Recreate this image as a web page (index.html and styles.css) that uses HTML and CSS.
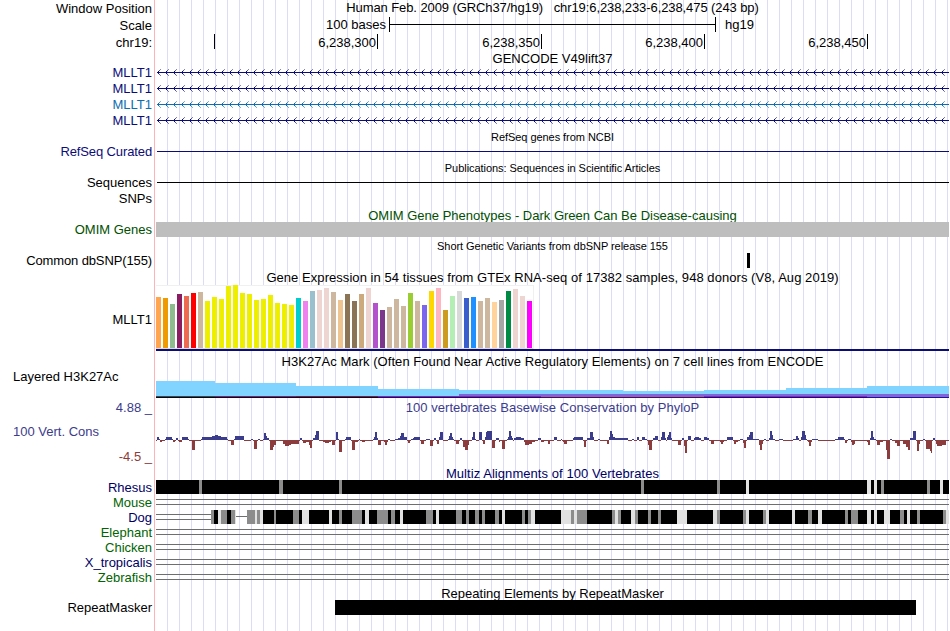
FILE: index.html
```
<!DOCTYPE html>
<html lang="en">
<head>
  <meta charset="UTF-8" />
  <title>Human chr19:6,238,233-6,238,475 - Genome Browser</title>
  <link rel="stylesheet" href="styles.css">
</head>
<body>

<div class="browser">

  <!-- Position and ruler -->
  <div class="row h17">
    <div class="label">Window Position</div>
    <div class="title position">Human Feb. 2009 (GRCh37/hg19) &nbsp; chr19:6,238,233-6,238,475 (243 bp)</div>
  </div>
  <div class="row h17">
    <div class="label">Scale</div>
    <div class="scale">
      <span class="scale-size">100 bases</span>
      <span class="scale-bar"></span>
      <span>hg19</span>
    </div>
  </div>
  <div class="row h16">
    <div class="label">chr19:</div>
    <div class="ruler">
      <span class="tick first"></span>
      <span class="tick">6,238,300</span>
      <span class="tick wide">6,238,350</span>
      <span class="tick">6,238,400</span>
      <span class="tick">6,238,450</span>
    </div>
  </div>

  <!-- Genes -->
  <div class="row h14"><div class="title gencode">GENCODE V49lift37</div></div>
  <div class="row h16 navy"><div class="label">MLLT1</div><svg class="track gene"></svg></div>
  <div class="row h16 navy"><div class="label">MLLT1</div><svg class="track gene"></svg></div>
  <div class="row h16 blue"><div class="label">MLLT1</div><svg class="track gene"></svg></div>
  <div class="row h16 navy"><div class="label">MLLT1</div><svg class="track gene"></svg></div>
  <div class="row h16"><div class="title small">RefSeq genes from NCBI</div></div>
  <div class="row h15 navy"><div class="label tight">RefSeq Curated</div><div class="line"></div></div>
  <div class="row h16"><div class="title small">Publications: Sequences in Scientific Articles</div></div>
  <div class="row h15"><div class="label">Sequences</div><div class="line"></div></div>
  <div class="row h17"><div class="label">SNPs</div></div>
  <div class="row h15 green"><div class="title omim">OMIM Gene Phenotypes - Dark Green Can Be Disease-causing</div></div>
  <div class="row h15 green"><div class="label">OMIM Genes</div><div class="omim-bar"></div></div>
  <div class="row h16"><div class="title small">Short Genetic Variants from dbSNP release 155</div></div>
  <div class="row h15"><div class="label tight">Common dbSNP(155)</div><div class="snp"></div></div>

  <!-- GTEx -->
  <div class="row h17"><div class="title gtex-title">Gene Expression in 54 tissues from GTEx RNA-seq of 17382 samples, 948 donors (V8, Aug 2019)</div></div>
  <div class="row h66">
    <div class="label">MLLT1</div>
    <div class="gtex">
      <div class="gtex-bars" id="gtex"></div>
    </div>
  </div>

  <!-- H3K27Ac -->
  <div class="row h20"><div class="title h3k-title">H3K27Ac Mark (Often Found Near Active Regulatory Elements) on 7 cell lines from ENCODE</div></div>
  <div class="row h29 h3k-row"><div class="label left">Layered H3K27Ac</div><svg class="track" id="h3k"></svg></div>

  <!-- Conservation -->
  <div class="row h15 cons"><div class="label">4.88 _</div><div class="title phylop-title">100 vertebrates Basewise Conservation by PhyloP</div></div>
  <div class="row h52 cons">
    <div class="cons-labels">
      <div class="label left">100 Vert. Cons</div>
      <div class="label low">-4.5 _</div>
    </div>
    <svg class="track" id="phylop"></svg>
  </div>
  <div class="row h13 midnight"><div class="title multiz">Multiz Alignments of 100 Vertebrates</div></div>
  <div class="row h15 midnight"><div class="label">Rhesus</div><svg class="track" id="rhesus"></svg></div>
  <div class="row h15 forest"><div class="label">Mouse</div><div class="gap"></div></div>
  <div class="row h15 midnight"><div class="label">Dog</div><svg class="track" id="dog"></svg></div>
  <div class="row h15 forest"><div class="label">Elephant</div><div class="gap"></div></div>
  <div class="row h15 forest"><div class="label">Chicken</div><div class="gap"></div></div>
  <div class="row h15 midnight"><div class="label">X_tropicalis</div><div class="gap"></div></div>
  <div class="row h15 forest"><div class="label">Zebrafish</div><div class="gap"></div></div>

  <!-- Repeats -->
  <div class="row h15"><div class="title repeat-title">Repeating Elements by RepeatMasker</div></div>
  <div class="row h15"><div class="label">RepeatMasker</div><div class="repeat"></div></div>

</div>

<script src="script.js"></script>
</body>
</html>
```
FILE: styles.css
```
body {
  margin: 0;
  background: #fff;
  font-family: "Liberation Sans", Arial, sans-serif;
  font-size: 13px;
  color: #000;
}
.browser {
  width: 949px;
  height: 631px;
  overflow: hidden;
  background:
    linear-gradient(#ffb4b4, #ffb4b4) 154px 0 / 1px 100% no-repeat,
    repeating-linear-gradient(to right, transparent 0 11px, #dcdcf8 11px 12px) 156px 0 / 793px 100% no-repeat;
}
.row {
  display: grid;
  grid-template-columns: 152px 793px;
  grid-template-rows: 100%;
  column-gap: 4px;
  white-space: nowrap;
}
.h13 { height: 13px; line-height: 13px; }
.h14 { height: 14px; line-height: 16px; }
.h15 { height: 15px; line-height: 15px; }
.h16 { height: 16px; line-height: 17px; }
.h17 { height: 17px; line-height: 17px; }
.h20 { height: 20px; line-height: 21px; }
.h29 { height: 29px; }
.h52 { height: 52px; }
.h66 { height: 66px; line-height: 69px; }

.navy { color: #0c0c78; }
.blue { color: #0c6eb0; }
.green { color: #005000; }
.cons { color: #3c3c8c; }
.midnight { color: #000064; }
.forest { color: #006400; }

.label {
  grid-column: 1;
  text-align: right;
}
.label.left {
  text-align: left;
  padding-left: 13px;
}
.label.tight {
  letter-spacing: -0.12px;
}
.title {
  grid-column: 2;
  text-align: center;
}
.small {
  font-size: 11px;
  line-height: 19px;
  letter-spacing: -0.05px;
}
.position {
  line-height: 15px;
  letter-spacing: -0.09px;
}
.gencode {
  line-height: 18px;
}
.omim {
  line-height: 17px;
}
.gtex-title {
  line-height: 19px;
  letter-spacing: 0.055px;
}
.h3k-title {
  letter-spacing: 0.05px;
}
.phylop-title {
  letter-spacing: 0.03px;
}
.multiz {
  letter-spacing: 0.06px;
}
.repeat-title {
  line-height: 17px;
}
.track {
  display: block;
  width: 793px;
  height: 100%;
  shape-rendering: crispEdges;
}

/* scale and ruler */
.scale {
  display: flex;
  line-height: 16px;
}
.scale-size {
  width: 230px;
  margin-right: 3px;
  text-align: right;
}
.scale-bar {
  width: 325px;
  height: 15px;
  margin-right: 9px;
  border: solid #000;
  border-width: 0 1px;
  background: linear-gradient(#000, #000) 0 7px / 100% 1px no-repeat;
}
.ruler {
  display: flex;
}
.tick {
  box-sizing: border-box;
  width: 163px;
  height: 15px;
  border-right: 1px solid #000;
  padding-right: 1px;
  text-align: right;
}
.tick.first {
  width: 59px;
}
.tick.wide {
  width: 164px;
}

/* simple tracks */
.line {
  height: 1px;
  margin: 7px 0 0 1px;
  background: currentColor;
}
.omim-bar {
  background: #bebebe;
}
.snp {
  width: 3px;
  margin-left: 591px;
  background: #000;
}
.repeat {
  width: 581px;
  margin-left: 179px;
  background: #000;
}
.gap {
  height: 4px;
  margin-top: 4px;
  border: solid #6e6e6e;
  border-width: 1px 0;
}

/* expression bars */
.gtex {
  border-bottom: 2px solid #0c0c78;
}
.gtex-bars {
  display: flex;
  align-items: flex-end;
  gap: 2px;
  box-sizing: border-box;
  width: 378px;
  height: 64px;
  background: #fff;
  border: solid #f0f0f0;
  border-width: 1px 1px 0 0;
  box-shadow: inset 0 -1px #dcdcdc;
  padding-bottom: 1px;
}
.gtex-bars div {
  flex: none;
  width: 5px;
}

/* signal tracks */
.h3k-row .label {
  line-height: 11px;
}
.cons-labels {
  display: flex;
  flex-direction: column;
  line-height: 15px;
}
.cons-labels .label.left {
  margin-top: 9px;
}
.label.low {
  margin-top: 10px;
  color: #8c3c3c;
}
```
FILE: script.js
```
const SVG_NS = "http://www.w3.org/2000/svg";
const START = 156;
const END = 949;

function setup(svg, height) {
  svg.setAttribute("viewBox", `${START} 0 ${END - START} ${height}`);
  svg.setAttribute("preserveAspectRatio", "none");
}

function rect(svg, x, y, w, h, fill, opacity) {
  const r = document.createElementNS(SVG_NS, "rect");
  r.setAttribute("x", x);
  r.setAttribute("y", y);
  r.setAttribute("width", w);
  r.setAttribute("height", h);
  r.setAttribute("fill", fill);
  if (opacity) r.setAttribute("opacity", opacity);
  svg.appendChild(r);
}

// Introns with strand arrows
document.querySelectorAll(".gene").forEach(svg => {
  setup(svg, 16);
  rect(svg, START + 1, 8, END - START, 1, "currentColor");
  for (let x = START + 1; x < END; x += 8) {
    rect(svg, x + 1, 7, 1, 3, "currentColor");
    rect(svg, x + 2, 6, 1, 1, "currentColor", 0.7);
    rect(svg, x + 2, 10, 1, 1, "currentColor", 0.7);
    rect(svg, x + 3, 5, 1, 1, "currentColor", 0.5);
    rect(svg, x + 3, 11, 1, 1, "currentColor", 0.5);
  }
});

// GTEx tissues: colour, height
const tissues = [
  ["#ffa54f", 51], ["#ee9a00", 50], ["#8fbc8f", 44], ["#8b1c62", 54], ["#ee6a50", 52], ["#ff0000", 55],
  ["#cdb79e", 56], ["#eeee00", 47], ["#eeee00", 51], ["#eeee00", 49], ["#eeee00", 62], ["#eeee00", 63],
  ["#eeee00", 55], ["#eeee00", 54], ["#eeee00", 48], ["#eeee00", 49], ["#eeee00", 53], ["#eeee00", 45],
  ["#eeee00", 44], ["#eeee00", 43], ["#00cdcd", 50], ["#ee82ee", 47], ["#9ac0cd", 57], ["#eed5d2", 58],
  ["#eed5d2", 60], ["#cdb79e", 56], ["#eec591", 48], ["#8b7355", 54], ["#8b7355", 47], ["#cdaa7d", 54],
  ["#eed5d2", 60], ["#b452cd", 45], ["#7a378b", 38], ["#cdb79e", 41], ["#cdb79e", 49], ["#cdb79e", 42],
  ["#9acd32", 55], ["#cdb79e", 47], ["#7a67ee", 43], ["#ffd700", 57], ["#ffb6c1", 60], ["#cd9b1d", 38],
  ["#b4eeb4", 52], ["#d9d9d9", 57], ["#3a5fcd", 50], ["#1e90ff", 51], ["#cdb79e", 47], ["#cdb79e", 50],
  ["#ffd39b", 46], ["#a6a6a6", 48], ["#008b45", 57], ["#eed5d2", 59], ["#eed5d2", 52], ["#ff00ff", 47]
];
document.getElementById("gtex").innerHTML = tissues
  .map(([color, h]) => `<div style="height:${h}px;background:${color}"></div>`)
  .join("");

// H3K27Ac: x, end, signal height, purple height, colour of the lowest layer
const h3k = document.getElementById("h3k");
setup(h3k, 29);
[
  [156, 215, 17, 0, "#285050"], [215, 296, 15, 0, "#6e2878"], [296, 378, 12, 2, "#6e2050"],
  [378, 459, 9, 2, "#6432c8"], [459, 541, 8, 4, "#6432c8"], [541, 623, 8, 4, "#8264d8"],
  [623, 704, 7, 4, "#8264d8"], [704, 786, 8, 4, "#6e32c8"], [786, 867, 10, 4, "#6e32c8"],
  [867, 949, 12, 4, "#8264d8"]
].forEach(([x, end, h, purple, low]) => {
  rect(h3k, x, 27 - h, end - x, h, "#80d4ff");
  rect(h3k, x, 27 - purple, end - x, purple, "#8264d8");
  rect(h3k, x, 25, end - x, 1, low);
  rect(h3k, x, 26, end - x, 1, x < 378 ? "#140014" : x < 541 ? "#3c0050" : x < 704 ? "#5a0a3c" : x < 867 ? "#32006e" : "#1e149b");
});

// PhyloP: x, width, score height
const phylop = document.getElementById("phylop");
const ZERO = 25;
setup(phylop, 52);
const scores = `157,2,3 159,1,1 160,2,-2 165,1,1 166,6,3 172,1,1 173,2,-2 176,2,2 179,3,-2 182,6,3 188,1,1
192,3,-10 201,1,1 202,10,3 212,3,4 215,3,5 218,3,4 221,6,3 227,1,1 231,3,-5 234,1,1 235,9,4 251,2,1
254,3,-9 258,2,1 263,1,1 264,2,7 266,1,4 267,2,2 270,3,-10 273,1,-7 274,2,-5 283,2,-4 285,4,-6 289,2,-5
291,8,-4 300,2,2 303,3,-3 306,3,-2 309,1,-5 310,2,-8 313,2,2 315,1,5 316,3,9 323,2,-2 325,4,-3 329,2,-2
332,3,-5 336,2,8 338,1,1 339,3,-12 345,1,1 346,5,3 352,3,-10 355,3,-2 359,1,1 362,3,-2 373,1,1 374,1,3
375,2,8 377,1,2 378,3,-5 384,1,-2 385,2,-5 387,1,-2 388,2,1 395,3,1 398,2,2 400,1,4 401,3,7 404,3,3
408,2,-3 411,2,1 413,1,2 414,6,3 421,3,-4 426,4,1 430,3,-6 434,2,2 437,2,-4 439,1,3 440,3,8 448,1,1
449,1,4 450,2,7 452,1,3 453,1,1 456,3,-4 460,2,2 463,2,-7 465,3,-10 468,1,-5 472,1,3 473,2,8 475,1,1
479,3,8 483,2,-4 485,1,3 486,1,8 487,5,9 492,3,-8 496,3,2 499,1,-2 502,3,-9 507,1,1 508,1,3 509,2,9
511,1,4 512,1,2 514,2,2 516,5,3 521,3,2 524,1,-2 525,4,-5 529,3,-4 532,3,-2 538,3,2 541,3,-2 548,2,-4
554,3,3 561,1,1 563,1,-2 564,3,-4 573,1,2 574,9,3 584,2,-7 587,3,2 590,3,8 593,1,3 598,2,1 607,2,-4
609,1,3 610,2,9 612,1,6 613,2,3 615,13,2 632,2,1 637,2,3 642,3,3 645,2,1 648,1,-5 649,3,-10 653,2,2
655,3,4 661,1,3 662,3,8 665,1,2 667,1,3 668,1,5 669,2,8 671,1,2 678,3,-5 680,1,-5 682,2,2 684,1,-6
685,2,-13 688,3,4 694,1,2 695,4,3 699,2,2 704,3,3 707,2,2 711,3,-4 720,1,-2 721,2,-4 723,1,-2 727,6,3
734,2,-4 736,2,-2 740,3,1 743,1,-3 744,2,-8 747,2,3 749,1,5 750,3,8 753,6,1 759,1,-5 760,2,-10 762,1,-4
764,2,1 769,1,2 770,2,9 772,1,5 773,2,1 779,4,1 793,3,1 796,2,4 798,1,2 801,1,3 802,3,9 805,1,5 806,1,1
808,1,-2 809,2,-6 811,1,-2 812,6,1 835,3,1 838,6,3 844,1,1 845,2,-3 848,3,1 851,1,-2 852,2,-5 854,1,-4
867,1,-2 868,2,-5 870,1,2 871,2,9 873,1,3 874,2,1 877,3,-5 880,3,-2 886,1,-10 887,3,-19 890,2,1
895,2,-3 897,3,-6 903,3,-4 906,2,-7 908,2,-10 910,2,2 912,1,2 913,3,9 917,2,-11 919,1,-4 923,2,1
926,4,-9 930,1,-11 931,1,-13 933,2,2 936,1,-4 937,5,-6 942,4,-5`
  .split(/\s+/).map(s => s.split(",").map(Number));
let last = START;
scores.forEach(([x, w, v]) => {
  if (x > last) rect(phylop, last, ZERO, x - last, 1, "#8c3c3c");
  if (v > 0) rect(phylop, x, ZERO - v, w, v, "#3c3c8c");
  else rect(phylop, x, ZERO, w, -v, "#8c3c3c");
  last = x + w;
});
rect(phylop, last, ZERO, END - last, 1, "#8c3c3c");

// Alignments: g = mismatching, l = unaligned bases
function alignment(svg, from, marks) {
  rect(svg, from, 0, END - from, 14, "#000");
  marks.split(/\s+/).forEach(m => {
    const [x, w] = m.slice(1).split(",").map(Number);
    rect(svg, x, 0, w, 14, m[0] === "g" ? "#8c8c8c" : "#e1e1e1");
  });
}

const rhesus = document.getElementById("rhesus");
setup(rhesus, 15);
alignment(rhesus, START, "g199,3 g279,4 g339,3 g641,3 g717,3 l746,3 l867,4 l874,3 g881,3 g927,3 l940,3");

const dog = document.getElementById("dog");
setup(dog, 15);
rect(dog, START, 4, 55, 1, "#6e6e6e");
rect(dog, START, 9, 55, 1, "#6e6e6e");
rect(dog, 236, 6, 11, 1, "#6e6e6e");
rect(dog, 214, 0, 4, 14, "#000");
rect(dog, 227, 0, 4, 14, "#000");
alignment(dog, 263, `g211,3 l218,3 g221,6 g231,4 l235,1 g247,8 l255,2 g257,3 l260,3 g274,2 g293,6 l302,7
l329,3 g339,3 g352,10 l365,4 g377,11 g391,4 l400,3 g426,7 l436,3 g456,6 g466,3 g475,4 g482,3 g495,4
l502,3 g522,3 g528,3 l531,4 l561,10 g571,3 l574,3 g577,10 g612,3 l615,3 g618,3 l631,4 g635,3 g648,3
g658,3 l677,10 l713,4 g717,3 g743,3 l746,3 g763,3 l766,3 l792,3 g808,4 l818,4 g845,3 g851,7 l867,4
l874,3 l884,6 g900,4 l907,3 g917,3 g943,3 l946,3`);
```
